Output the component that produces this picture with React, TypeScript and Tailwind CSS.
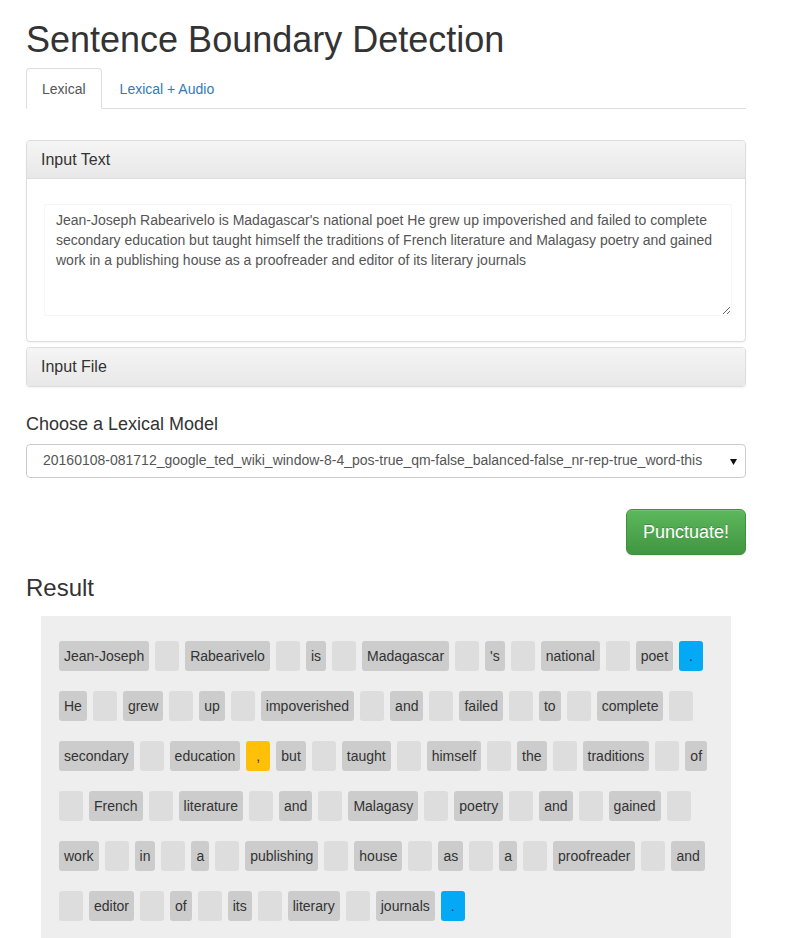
import React from "react";

type Tok = { t: string; k: "w" | "b" | "p" | "c" };

const W = (t: string): Tok => ({ t, k: "w" });
const B: Tok = { t: "", k: "b" };
const P: Tok = { t: ".", k: "p" };
const C: Tok = { t: ",", k: "c" };

const rows: Tok[][] = [
  [W("Jean-Joseph"), B, W("Rabearivelo"), B, W("is"), B, W("Madagascar"), B, W("'s"), B, W("national"), B, W("poet"), P],
  [W("He"), B, W("grew"), B, W("up"), B, W("impoverished"), B, W("and"), B, W("failed"), B, W("to"), B, W("complete"), B],
  [W("secondary"), B, W("education"), C, W("but"), B, W("taught"), B, W("himself"), B, W("the"), B, W("traditions"), B, W("of")],
  [B, W("French"), B, W("literature"), B, W("and"), B, W("Malagasy"), B, W("poetry"), B, W("and"), B, W("gained"), B],
  [W("work"), B, W("in"), B, W("a"), B, W("publishing"), B, W("house"), B, W("as"), B, W("a"), B, W("proofreader"), B, W("and")],
  [B, W("editor"), B, W("of"), B, W("its"), B, W("literary"), B, W("journals"), P],
];

function Token({ tok }: { tok: Tok }) {
  if (tok.k === "w") {
    return (
      <span className="inline-block h-[30px] px-[5px] py-[5px] leading-[20px] rounded-[3px] bg-[#cccccc] text-[#333] text-[14px] whitespace-nowrap">
        {tok.t}
      </span>
    );
  }
  if (tok.k === "b") {
    return <span className="inline-block h-[30px] w-[24px] rounded-[3px] bg-[#dddddd]" />;
  }
  if (tok.k === "p") {
    return (
      <span className="inline-block h-[30px] w-[24px] py-[5px] leading-[20px] text-center rounded-[3px] bg-[#03a9f4] text-[#333] text-[14px]">
        .
      </span>
    );
  }
  return (
    <span className="inline-block h-[30px] w-[24px] py-[5px] leading-[20px] text-center rounded-[3px] bg-[#ffc107] text-[#333] text-[14px]">
      ,
    </span>
  );
}

const text =
  "Jean-Joseph Rabearivelo is Madagascar's national poet He grew up impoverished and failed to complete secondary education but taught himself the traditions of French literature and Malagasy poetry and gained work in a publishing house as a proofreader and editor of its literary journals";

export default function App() {
  return (
    <div
      className="bg-white min-h-[938px] text-[#333] text-[14px]"
      style={{ fontFamily: '"Liberation Sans", Arial, Helvetica, sans-serif' }}
    >
      <div className="ml-[26px] w-[720px]">
        <h1 className="mt-[20px] mb-[8px] text-[36px] leading-[39.6px] font-normal text-[#333]">
          Sentence Boundary Detection
        </h1>

        <div className="flex border-b border-[#dddddd] h-[41px]">
          <div className="mb-[-1px] h-[41px] px-[15px] py-[10px] leading-[20px] border border-[#dddddd] border-b-white rounded-t-[4px] bg-white text-[#555] mr-[2px]">
            Lexical
          </div>
          <div className="h-[40px] px-[15px] py-[10px] leading-[20px] border border-transparent text-[#337ab7]">
            Lexical + Audio
          </div>
        </div>

        <div className="mt-[31px]">
          <div className="border border-[#dddddd] rounded-[4px] shadow-[0_1px_2px_rgba(0,0,0,0.05)] bg-white">
            <div className="px-[14px] py-[10px] text-[16px] leading-[17.6px] text-[#333] bg-linear-to-b from-[#f5f5f5] to-[#e8e8e8] border-b border-[#dddddd] rounded-t-[3px]">
              Input Text
            </div>
            <div className="pt-[25px] pb-[25px] pl-[17px] pr-[13px]">
              <textarea
                readOnly
                defaultValue={text}
                className="block w-full h-[112px] border border-[#f6f6f6] rounded-[2px] px-[11px] py-[5px] text-[14px] leading-[20px] text-[#555] bg-white outline-none resize-y"
                style={{ fontFamily: '"Liberation Sans", Arial, Helvetica, sans-serif' }}
              />
            </div>
          </div>
          <div className="mt-[5px] border border-[#dddddd] rounded-[4px] shadow-[0_1px_2px_rgba(0,0,0,0.05)] bg-white">
            <div className="px-[14px] py-[10px] text-[16px] leading-[17.6px] text-[#333] bg-linear-to-b from-[#f5f5f5] to-[#e8e8e8] rounded-[3px]">
              Input File
            </div>
          </div>
        </div>

        <div className="mt-[27px] text-[18px] leading-[20px] text-[#333]">Choose a Lexical Model</div>
        <div className="mt-[10px] relative h-[34px] border border-[#cccccc] rounded-[4px] bg-white flex items-center pl-[16px] text-[14px] text-[#555]">
          <span>20160108-081712_google_ted_wiki_window-8-4_pos-true_qm-false_balanced-false_nr-rep-true_word-this</span>
          <svg className="absolute right-[8px] top-[14px]" width="7" height="6" viewBox="0 0 7 6">
            <path d="M0 0 L7 0 L3.5 6 Z" fill="#111" />
          </svg>
        </div>

        <div className="mt-[31px] flex justify-end">
          <button className="h-[46px] px-[16px] border border-[#3e8f3e] rounded-[6px] text-white text-[18px] leading-[24px] bg-linear-to-b from-[#5cb85c] to-[#419641] shadow-[inset_0_1px_0_rgba(255,255,255,0.15),0_1px_1px_rgba(0,0,0,0.075)] [text-shadow:0_-1px_0_rgba(0,0,0,0.2)]">
            Punctuate!
          </button>
        </div>

        <h3 className="mt-[20px] text-[24px] leading-[26.4px] font-normal text-[#333]">Result</h3>

        <div className="mt-[15px] ml-[15px] w-[690px] bg-[#eeeeee] pt-[25px] pb-[25px] pl-[18px] flex flex-col gap-[20px]">
          {rows.map((r, i) => (
            <div key={i} className="flex gap-[6px]">
              {r.map((tok, j) => (
                <Token key={j} tok={tok} />
              ))}
            </div>
          ))}
        </div>
      </div>
    </div>
  );
}
